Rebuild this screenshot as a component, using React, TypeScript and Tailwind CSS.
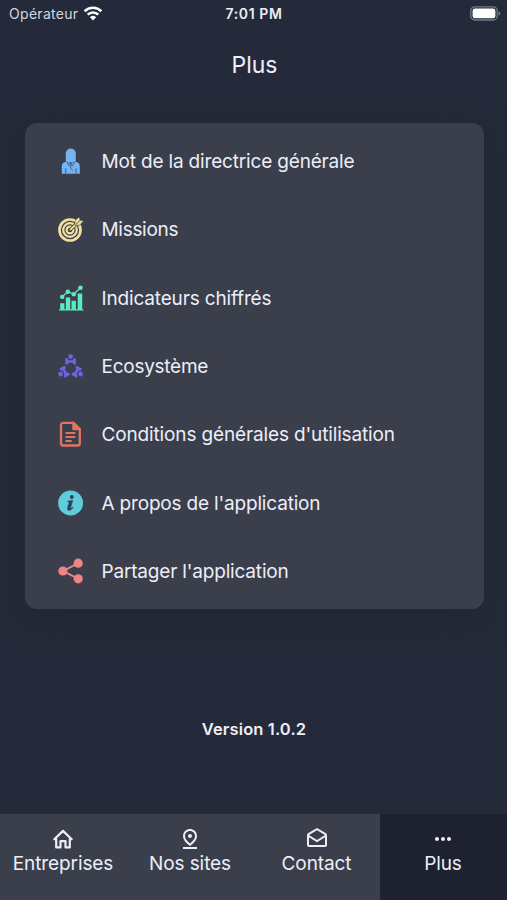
import type { ReactNode } from 'react';
import { MdMoreHoriz, MdOutlineDrafts, MdOutlinePinDrop } from 'react-icons/md';

type MenuItem = { label: string; icon: ReactNode; className: string };

const MENU: MenuItem[] = [
  { label: 'Mot de la directrice générale', icon: <DirectorIcon />, className: 'tracking-[-0.17px]' },
  { label: 'Missions', icon: <TargetIcon />, className: 'tracking-[-0.3px]' },
  { label: 'Indicateurs chiffrés', icon: <ChartIcon />, className: 'tracking-[-0.16px]' },
  { label: 'Ecosystème', icon: <EcosystemIcon />, className: 'tracking-[-0.26px]' },
  { label: "Conditions générales d'utilisation", icon: <TermsIcon />, className: 'tracking-[-0.14px]' },
  { label: "A propos de l'application", icon: <InfoIcon />, className: 'tracking-[-0.18px]' },
  { label: "Partager l'application", icon: <ShareIcon />, className: 'tracking-[-0.18px]' },
];

export default function App() {
  return (
    <div className="flex h-[900px] w-[507px] flex-col overflow-hidden bg-[#242a39] font-['Inter','Liberation_Sans',sans-serif] text-[#eceef8]">
      <StatusBar />
      <h1 className="flex h-[74px] items-center justify-center pl-[2px] text-[23px] leading-none">Plus</h1>

      <main className="mr-[23px] ml-[25px] mt-[21px] flex h-[486px] shrink-0 flex-col justify-center rounded-[12px] bg-[#3b3f4c] shadow-[0_10px_30px_rgba(34,39,50,0.8)]">
        {MENU.map((item) => (
          <button key={item.label} type="button" className="flex h-[68.4px] items-center gap-[17.5px] pl-[33px] text-left">
            {item.icon}
            <span className={`pt-[1px] text-[19px] leading-none whitespace-nowrap ${item.className}`}>{item.label}</span>
          </button>
        ))}
      </main>

      <p className="mt-[108px] pl-[1px] text-center text-[16.5px] leading-6 font-semibold tracking-[0.13px]">Version 1.0.2</p>

      <TabBar />
    </div>
  );
}

function StatusBar() {
  return (
    <header className="grid h-7 shrink-0 grid-cols-3 items-center pr-[6px] pl-[9px]">
      <div className="flex items-center gap-[5px] text-[14px] leading-none tracking-[0.3px] text-[#d3d6df]">
        Opérateur
        <svg viewBox="0 0 20 15" className="-mt-[2px] h-[15px] w-5" fill="none" stroke="#fff" strokeWidth="2.6">
          <path d="M1.6 5.2a12 12 0 0 1 16.8 0" />
          <path d="M4.7 8.6a7.6 7.6 0 0 1 10.6 0" />
          <path d="M10 14.4 6.9 11.2a4.5 4.5 0 0 1 6.2 0z" fill="#fff" stroke="none" />
        </svg>
      </div>
      <div className="-ml-[2px] text-center text-[14px] leading-none font-semibold tracking-[0.6px]">7:01 PM</div>
      <svg viewBox="0 0 31 15" className="-mt-[1px] h-[15px] w-[31px] justify-self-end">
        <rect x="0.8" y="0.8" width="26.4" height="13.2" rx="4" fill="none" stroke="#747985" strokeWidth="1.3" />
        <rect x="2.6" y="2.5" width="22.8" height="9.8" rx="2.4" fill="#fff" />
        <path d="M28.5 5.2c2.4.7 2.4 3.7 0 4.4z" fill="#747985" />
      </svg>
    </header>
  );
}

function TabBar() {
  return (
    <nav className="mt-auto grid h-[86px] shrink-0 grid-cols-[127px_127px_126px_127px] bg-[#3b3f4c]">
      <Tab label="Entreprises">
        <svg viewBox="0 0 24 24" className="h-6 w-6" fill="none" stroke="currentColor" strokeWidth="2.2" strokeLinejoin="round" strokeLinecap="round">
          <path d="M3.3 12.2 12 3.9l8.7 8.3H18.8V20.4H14.5V14.2H9.5V20.4H5.2V12.2z" />
        </svg>
      </Tab>
      <Tab label="Nos sites">
        <MdOutlinePinDrop className="h-6 w-6" />
      </Tab>
      <Tab label="Contact">
        <MdOutlineDrafts className="h-6 w-6" />
      </Tab>
      <Tab label="Plus" active>
        <MdMoreHoriz className="h-6 w-6" />
      </Tab>
    </nav>
  );
}

function Tab({ label, active = false, children }: { label: string; active?: boolean; children: ReactNode }) {
  return (
    <button type="button" className={`flex flex-col items-center pt-[13px] pr-[1px] ${active ? 'bg-[#1e2130]' : ''}`}>
      {children}
      <span className="mt-[1px] text-[19px] leading-6 tracking-[-0.1px]">{label}</span>
    </button>
  );
}

/* Icônes du menu, toutes sur une grille de 26px */

function DirectorIcon() {
  return (
    <svg viewBox="0 0 26 26" className="h-[26px] w-[26px] shrink-0" fill="#72b4f4">
      <path d="M7.8 13.2V5.6a5 5 0 0 1 10 0v7.6l-2.4 1.4h-5.2z" />
      <path d="M3.8 25.7v-7.2q0-3.7 3.4-4.5l1.8-.4 3.8 2.6 3.8-2.6 1.8.4q3.4.8 3.4 4.5v7.2z" />
      <path d="m9.1 14 2 3.8 1.7-1.4 1.8 1.5 1.9-3.9M12.8 17.2v3.2l2 2.3M7.7 20.3v5.4M18.1 20.3v5.4" fill="none" stroke="#3e5674" strokeWidth="0.9" />
    </svg>
  );
}

function TargetIcon() {
  return (
    <svg viewBox="0 0 26 26" className="h-[26px] w-[26px] shrink-0" fill="none" stroke="#f3dfa0">
      <circle cx="12" cy="14" r="10.5" strokeWidth="2.7" />
      <circle cx="12" cy="14" r="6.8" strokeWidth="2.3" />
      <circle cx="12" cy="14" r="3.4" strokeWidth="2.2" />
      <path d="m13 13 8-7.4" stroke="#3b3f4c" strokeWidth="3.4" />
      <path d="m12 14 10-9.3" strokeWidth="1.8" />
      <path d="m16.8 8.6.3-4.1 4.2-3.8.7 3.4 3.6.8-3.8 4.2-4.1.3z" fill="#f3dfa0" stroke="#3b3f4c" strokeWidth="0.6" />
      <path d="m17.5 8.7 5-4.6" stroke="#3b3f4c" strokeWidth="0.8" />
    </svg>
  );
}

function ChartIcon() {
  return (
    <svg viewBox="0 0 26 26" className="h-[26px] w-[26px] shrink-0" fill="#58edc0">
      <path d="M2.2 18.2h4.2v6.1h1.4V12.4h4.4v11.9h1.3v-8.6h4.4v8.6h1.8V8.4h4.5v15.9h1.2v1.3H1.1v-1.3h1.1z" />
      <path d="m4.2 11.7 5.6-5 6 2.3 6.7-6.3" fill="none" stroke="#58edc0" strokeWidth="1.3" />
      <circle cx="4.2" cy="11.9" r="2.2" />
      <circle cx="9.8" cy="6.7" r="2.2" />
      <circle cx="15.8" cy="9.2" r="2.2" />
      <circle cx="22.5" cy="2.8" r="2.3" />
    </svg>
  );
}

function EcosystemIcon() {
  return (
    <svg viewBox="0.4 0 26 26" className="h-[26px] w-[26px] shrink-0" fill="#7163e0">
      {['rotate(0 13 15.2)', 'rotate(120 13 15.2)', 'rotate(240 13 15.2)'].map((turn) => (
        <g key={turn} transform={turn}>
          <circle cx="13" cy="3.6" r="2.3" />
          <path d="M7.7 5.3h2.2L11.3 7.2h3.4L16.1 5.3h2.2v6.1h-2.5l-.6-1.6h-4.4l-.6 1.6H7.7z" />
        </g>
      ))}
    </svg>
  );
}

function TermsIcon() {
  return (
    <svg viewBox="0.4 0 26 26" className="h-[26px] w-[26px] shrink-0" fill="none" stroke="#e2745f" strokeWidth="2.3" strokeLinejoin="round" strokeLinecap="round">
      <path d="M5.6 1.9h10.2l6.4 6.3v14.1a2.2 2.2 0 0 1-2.2 2.2H5.6a2.2 2.2 0 0 1-2.2-2.2V4.1a2.2 2.2 0 0 1 2.2-2.2z" />
      <path d="M15.8 1.9v6.3h6.4z" fill="#e2745f" />
      <path d="M8.7 12h8.2M8.7 16h8.2M8.7 20h4.6" strokeWidth="2.1" />
    </svg>
  );
}

function InfoIcon() {
  return (
    <svg viewBox="0.4 0 26 26" className="h-[26px] w-[26px] shrink-0">
      <circle cx="13" cy="13" r="12.5" fill="#5fcbdc" />
      <circle cx="14.2" cy="7" r="1.9" fill="#2d4050" />
      <path
        d="m10 11.2 5-.7-2 7.3c-.3 1.1.5.9 1.9-.6l.6.5c-2.7 3.5-6.3 3.4-5.4.1l1.4-5.1c.2-.7-.2-.9-1.6-.9z"
        fill="#2d4050"
        stroke="#2d4050"
        strokeWidth="0.6"
      />
    </svg>
  );
}

function ShareIcon() {
  return (
    <svg viewBox="0.4 0 26 26" className="h-[26px] w-[26px] shrink-0" fill="#ee8583">
      <path d="M20.8 5.1 5.5 13l15.3 7.9" fill="none" stroke="#ee8583" strokeWidth="1.9" />
      <circle cx="5.3" cy="13" r="4.6" />
      <circle cx="20.6" cy="5.2" r="4.6" />
      <circle cx="20.6" cy="20.8" r="4.6" />
    </svg>
  );
}
